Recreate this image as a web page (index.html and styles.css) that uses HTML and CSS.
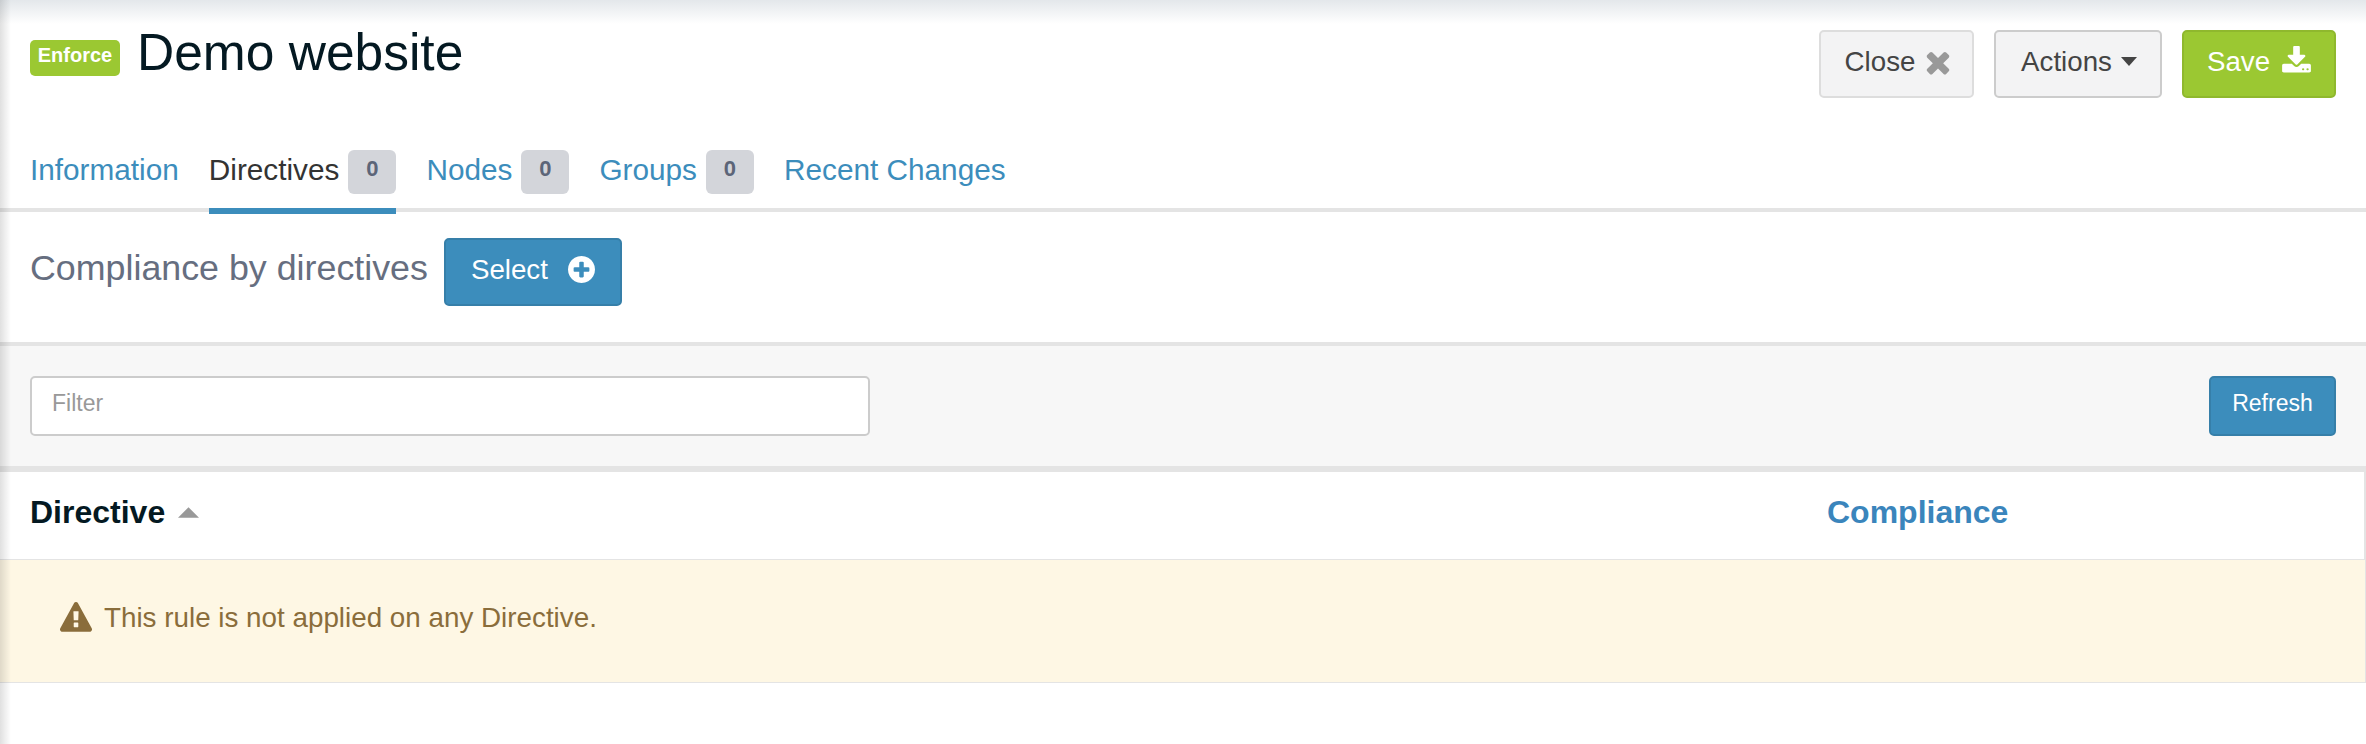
FILE: index.html
```html
<!DOCTYPE html>
<html lang="en">
<head>
    <meta charset="UTF-8">
    <meta name="viewport" content="width=device-width, initial-scale=1.0">
    <title>Demo website</title>
    <link rel="stylesheet" href="styles.css">
</head>
<body>
    <div class="page-shadow"></div>

    <header class="rule-header">
        <div class="rule-title">
            <span class="mode-badge">Enforce</span>
            <h1>Demo website</h1>
        </div>
        <div class="header-actions">
            <button type="button" class="btn btn-default btn-close">Close
                <svg class="icon icon-times" viewBox="0 0 1792 1792"><path d="M1490 1322q0 40-28 68l-136 136q-28 28-68 28t-68-28l-294-294-294 294q-28 28-68 28t-68-28l-136-136q-28-28-28-68t28-68l294-294-294-294q-28-28-28-68t28-68l136-136q28-28 68-28t68 28l294 294 294-294q28-28 68-28t68 28l136 136q28 28 28 68t-28 68l-294 294 294 294q28 28 28 68z"/></svg>
            </button>
            <button type="button" class="btn btn-default btn-actions">Actions
                <svg class="icon icon-caret" viewBox="0 0 16 9"><path d="M0 0h16L8 9z"/></svg>
            </button>
            <button type="button" class="btn btn-success">Save
                <svg class="icon icon-save" viewBox="0 0 1792 1792"><path d="M1344 1344q0-26-19-45t-45-19-45 19-19 45 19 45 45 19 45-19 19-45zm256 0q0-26-19-45t-45-19-45 19-19 45 19 45 45 19 45-19 19-45zm128-224v320q0 40-28 68t-68 28h-1472q-40 0-68-28t-28-68v-320q0-40 28-68t68-28h465l135 136q58 56 136 56t136-56l136-136h464q40 0 68 28t28 68zm-325-569q17 41-14 70l-448 448q-18 19-45 19t-45-19l-448-448q-31-29-14-70 17-39 59-39h256v-448q0-26 19-45t45-19h256q26 0 45 19t19 45v448h256q42 0 59 39z"/></svg>
            </button>
        </div>
    </header>

    <nav class="tabs">
        <a class="tab" href="#">Information</a>
        <a class="tab active" href="#">Directives <span class="count">0</span></a>
        <a class="tab" href="#">Nodes <span class="count">0</span></a>
        <a class="tab" href="#">Groups <span class="count">0</span></a>
        <a class="tab" href="#">Recent Changes</a>
    </nav>

    <section class="section-head">
        <h3>Compliance by directives</h3>
        <button type="button" class="btn btn-primary btn-select">Select
            <svg class="icon icon-plus" viewBox="128 128 1536 1536"><path d="M1344 960v-128q0-26-19-45t-45-19h-256v-256q0-26-19-45t-45-19h-128q-26 0-45 19t-19 45v256h-256q-26 0-45 19t-19 45v128q0 26 19 45t45 19h256v256q0 26 19 45t45 19h128q26 0 45-19t19-45v-256h256q26 0 45-19t19-45zm320-64q0 209-103 385.5t-279.5 279.5-385.5 103-385.5-103-279.5-279.5-103-385.5 103-385.5 279.5-279.5 385.5-103 385.5 103 279.5 279.5 103 385.5z"/></svg>
        </button>
    </section>

    <div class="filter-bar">
        <input type="text" class="filter-input" placeholder="Filter">
        <button type="button" class="btn btn-primary btn-refresh">Refresh</button>
    </div>

    <div class="table-head">
        <div class="col-name">Directive
            <svg class="sort-icon" viewBox="0 0 16 8"><path d="M8 0l8 8H0z"/></svg>
        </div>
        <div class="col-compliance">Compliance</div>
    </div>
    <div class="empty-row">
        <svg class="icon-warning" viewBox="0 0 1792 1792"><path d="M1024 1375v-190q0-14-9.5-23.5t-22.5-9.5h-192q-13 0-22.5 9.5t-9.5 23.5v190q0 14 9.5 23.5t22.5 9.5h192q13 0 22.5-9.5t9.5-23.5zm-2-374l18-459q0-12-10-19-13-11-24-11h-220q-11 0-24 11-10 7-10 21l17 457q0 10 10 16.5t24 6.5h185q14 0 23.5-6.5t10.5-16.5zm-14-934l768 1408q35 63-2 126-17 29-46.5 46t-63.5 17h-1536q-34 0-63.5-17t-46.5-46q-37-63-2-126l768-1408q17-31 47-49t65-18 65 18 47 49z"/></svg>
        This rule is not applied on any Directive.
    </div>
</body>
</html>
```

FILE: styles.css
```css
html, body {
    height: 100%;
}

body {
    position: relative;
    margin: 0;
    overflow: hidden;
    font-family: "Liberation Sans", Arial, sans-serif;
    background-color: #fff;
    color: #041922;
}

.page-shadow {
    position: absolute;
    top: 0;
    left: 0;
    right: 0;
    bottom: 0;
    pointer-events: none;
    background:
        linear-gradient(to bottom, rgba(4, 40, 70, 0.11), rgba(4, 40, 70, 0) 24px),
        linear-gradient(to right, rgba(0, 0, 0, 0.12), rgba(0, 0, 0, 0) 11px);
}

.rule-header {
    display: flex;
    justify-content: space-between;
    height: 128px;
    padding: 30px 30px 0;
    box-sizing: border-box;
}

.rule-title {
    display: flex;
    align-items: flex-start;
}

.mode-badge {
    margin-top: 10px;
    height: 36px;
    width: 90px;
    line-height: 31px;
    text-align: center;
    font-size: 20px;
    font-weight: bold;
    color: #fff;
    background-color: #9bc832;
    border-radius: 5px;
}

h1 {
    margin: -9px 0 0 17px;
    font-size: 51.5px;
    line-height: 62px;
    font-weight: normal;
}

.header-actions {
    display: flex;
    gap: 20px;
}

.btn {
    display: inline-flex;
    align-items: center;
    justify-content: center;
    height: 68px;
    box-sizing: border-box;
    padding: 0 0 5px;
    font-family: inherit;
    font-size: 27.7px;
    border: 2px solid transparent;
    border-radius: 5px;
    cursor: pointer;
}

.btn-default {
    color: #444;
    background-color: #f3f3f4;
    border-color: #ddd;
}

.btn-close {
    width: 155px;
    padding-left: 7px;
}

.btn-actions {
    width: 168px;
    padding-left: 2px;
    border-color: #ccc;
}

.btn-success {
    width: 154px;
    padding-left: 1px;
    color: #fff;
    background-color: #9bc832;
    border-color: #8fb82d;
}

.btn-primary {
    color: #fff;
    background-color: #3c8dbc;
    border-color: #367fa9;
}

.icon {
    fill: currentColor;
}

.icon-times {
    width: 34px;
    height: 34px;
    margin-left: 6px;
    fill: #999;
}

.icon-caret {
    width: 16px;
    height: 9px;
    margin-left: 9px;
}

.icon-save {
    width: 31px;
    height: 31px;
    margin-left: 11px;
}

.icon-plus {
    width: 27px;
    height: 27px;
    margin-left: 20px;
}

.tabs {
    display: flex;
    gap: 30px;
    height: 84px;
    padding-left: 30px;
    box-sizing: border-box;
    border-bottom: 4px solid #e4e4e4;
}

.tab {
    display: flex;
    align-items: flex-start;
    gap: 9px;
    height: 86px;
    box-sizing: border-box;
    padding-top: 24px;
    font-size: 29.75px;
    line-height: 36px;
    color: #3c8dbc;
    text-decoration: none;
}

.tab.active {
    color: #333;
    border-bottom: 6px solid #3c8dbc;
}

.count {
    width: 48px;
    height: 44px;
    margin-top: -2px;
    line-height: 38px;
    text-align: center;
    font-size: 22px;
    font-weight: bold;
    color: #5c6578;
    background-color: #d3d5da;
    border-radius: 6px;
}

.section-head {
    display: flex;
    align-items: flex-start;
    height: 130px;
    padding: 26px 0 0 30px;
    box-sizing: border-box;
}

h3 {
    margin: 5px 16px 0 0;
    font-size: 35.8px;
    line-height: 50px;
    font-weight: normal;
    color: #666e80;
}

.btn-select {
    width: 178px;
}

.filter-bar {
    display: flex;
    justify-content: space-between;
    align-items: center;
    height: 130px;
    padding: 0 30px;
    box-sizing: border-box;
    background-color: #f7f7f7;
    border-top: 4px solid #e4e4e4;
    border-bottom: 6px solid #e4e4e4;
}

.filter-input {
    width: 840px;
    height: 60px;
    box-sizing: border-box;
    padding: 0 20px 5px;
    font-family: inherit;
    font-size: 23px;
    border: 2px solid #ccc;
    border-radius: 5px;
    background-color: #fff;
}

.filter-input::placeholder {
    color: #999;
}

.btn-refresh {
    width: 127px;
    height: 60px;
    font-size: 23px;
}

.table-head {
    display: flex;
    align-items: center;
    height: 88px;
    box-sizing: border-box;
    padding: 0 0 7px 30px;
    font-size: 32px;
    font-weight: bold;
    border-bottom: 1px solid #e4e4e4;
    border-right: 2px solid #e4e4e4;
}

.col-name {
    display: flex;
    align-items: center;
    width: 1797px;
}

.sort-icon {
    width: 21px;
    height: 11px;
    margin: 0 0 0 13px;
    fill: #999;
}

.col-compliance {
    color: #3a85bc;
}

.empty-row {
    display: flex;
    align-items: center;
    height: 123px;
    box-sizing: border-box;
    padding: 0 0 7px 60px;
    font-size: 27.8px;
    color: #8a6d3b;
    background-color: #fef7e4;
    border-bottom: 1px solid #e4e4e4;
    border-right: 1px solid #e4e4e4;
}

.icon-warning {
    width: 32px;
    height: 32px;
    margin-right: 12px;
    fill: currentColor;
}
```
